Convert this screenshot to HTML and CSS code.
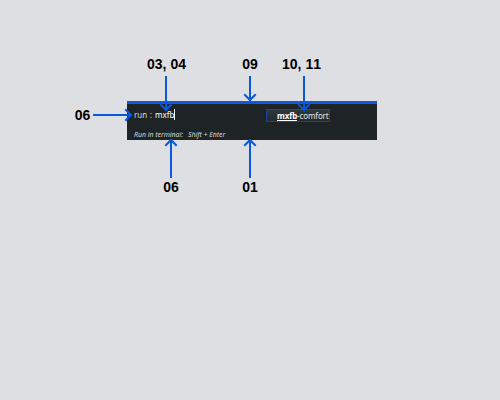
FILE: index.html
```
<!DOCTYPE html>
<html lang="en">
<head>
<meta charset="utf-8">
<title>Run launcher diagram</title>
<link rel="stylesheet" href="styles.css">
</head>
<body>
<main class="diagram">
  <section class="launcher">
    <div class="entry">
      <div class="prompt"><span class="label"><span>run</span><span>:</span></span><span class="typed">mxfb</span><span class="caret"></span></div>
      <div class="match"><b>mxfb</b><span class="rest">-comfort</span></div>
    </div>
    <div class="hint"><span>Run in terminal:</span><span>Shift + Enter</span></div>
  </section>
  <svg class="arrows" width="500" height="400" viewBox="0 0 500 400">
    <path d="M166 77V110M161 105L166 110L171 105"/>
    <path d="M250 77V100M245 95L250 100L255 95"/>
    <path d="M304 77V110M299 105L304 110L309 105"/>
    <path d="M94 115H131M126 110L131 115L126 120"/>
    <path d="M171 177V140M166 145L171 140L176 145"/>
    <path d="M250 177V140M245 145L250 140L255 145"/>
  </svg>
  <span class="note n-input">03, 04</span>
  <span class="note n-border">09</span>
  <span class="note n-match">10, 11</span>
  <span class="note n-prompt">06</span>
  <span class="note n-hint">06</span>
  <span class="note n-back">01</span>
</main>
</body>
</html>
```
FILE: styles.css
```
body { margin: 0; background: #dedfe3; }
.diagram {
  position: relative;
  width: 500px;
  height: 400px;
  overflow: hidden;
  font-family: "Liberation Sans", sans-serif;
}
.launcher {
  box-sizing: border-box;
  width: 250px;
  height: 39px;
  margin: 101px 0 0 127px;
  border-top: 3px solid #1059de;
  background: #1e2325;
  color: #d4d7d8;
  font-family: "Noto Sans", sans-serif;
  white-space: nowrap;
}
.entry { display: flex; height: 20px; padding-left: 7px; }
.prompt {
  display: flex;
  align-items: center;
  width: 132px;
  height: 21px;
  font-size: 8px;
  line-height: 12px;
}
.label {
  box-sizing: border-box;
  display: flex;
  justify-content: space-between;
  width: 21px;
  padding-right: 3px;
}
.typed { color: #fff; }
.caret { width: 1px; height: 11px; background: #fff; }
.match {
  box-sizing: border-box;
  display: flex;
  width: 64px;
  height: 13px;
  margin-top: 5px;
  padding-left: 10px;
  border: 1px solid #1c439b;
  background: linear-gradient(#2f3940, #242a2e);
  font-size: 8px;
  letter-spacing: -0.13px;
  line-height: 12px;
}
.match b { color: #fff; text-decoration: underline; }
.rest { color: #e2e5e6; }
.hint {
  display: flex;
  gap: 5px;
  margin-top: 5px;
  padding-left: 7px;
  font-size: 7px;
  font-style: italic;
  letter-spacing: -0.05px;
  line-height: 11px;
}
.arrows {
  position: absolute;
  inset: 0;
  fill: none;
  stroke: #0857df;
  stroke-width: 2;
  stroke-linecap: square;
}
.note {
  position: absolute;
  transform: translateX(-50%);
  color: #000;
  font-size: 14px;
  font-weight: bold;
  font-kerning: none;
  line-height: 16px;
  white-space: nowrap;
}
.n-input { left: 166.5px; top: 56px; }
.n-border { left: 250px; top: 56px; }
.n-match { left: 301.5px; top: 56px; }
.n-prompt { left: 82.5px; top: 107px; }
.n-hint { left: 171px; top: 179px; }
.n-back { left: 250px; top: 179px; }
```
